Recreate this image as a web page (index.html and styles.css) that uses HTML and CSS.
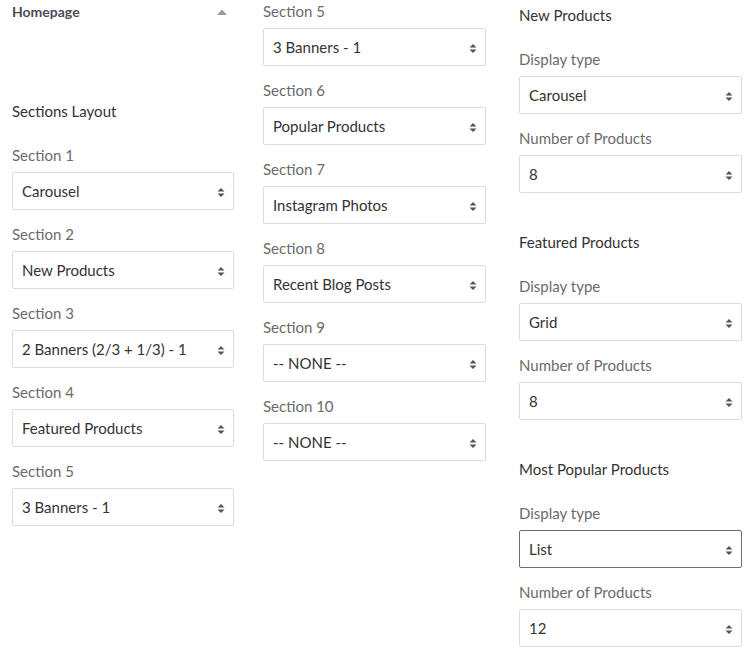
FILE: index.html
```html
<!DOCTYPE html>
<html lang="en">
<head>
<meta charset="utf-8">
<title>Homepage settings</title>
<link rel="stylesheet" href="styles.css">
</head>
<body>
<div class="page">
  <div class="col col-left">
    <div class="panel-head">
      <span class="panel-title">Homepage</span>
      <svg class="caret" width="10" height="6" viewBox="0 0 10 6"><path d="M0 6 L5 0.5 L10 6 Z" fill="#9a9a9a"/></svg>
    </div>
    <div class="group-title">Sections Layout</div>
    <div class="field"><div class="label">Section 1</div><div class="select"><span>Carousel</span><svg class="arrows" width="8" height="11" viewBox="0 0 8 11"><path d="M0.5 4.5 L4 1 L7.5 4.5 Z M0.5 6.5 L4 10 L7.5 6.5 Z" fill="#555"/></svg></div></div>
    <div class="field"><div class="label">Section 2</div><div class="select"><span>New Products</span><svg class="arrows" width="8" height="11" viewBox="0 0 8 11"><path d="M0.5 4.5 L4 1 L7.5 4.5 Z M0.5 6.5 L4 10 L7.5 6.5 Z" fill="#555"/></svg></div></div>
    <div class="field"><div class="label">Section 3</div><div class="select"><span>2 Banners (2/3 + 1/3) - 1</span><svg class="arrows" width="8" height="11" viewBox="0 0 8 11"><path d="M0.5 4.5 L4 1 L7.5 4.5 Z M0.5 6.5 L4 10 L7.5 6.5 Z" fill="#555"/></svg></div></div>
    <div class="field"><div class="label">Section 4</div><div class="select"><span>Featured Products</span><svg class="arrows" width="8" height="11" viewBox="0 0 8 11"><path d="M0.5 4.5 L4 1 L7.5 4.5 Z M0.5 6.5 L4 10 L7.5 6.5 Z" fill="#555"/></svg></div></div>
    <div class="field"><div class="label">Section 5</div><div class="select"><span>3 Banners - 1</span><svg class="arrows" width="8" height="11" viewBox="0 0 8 11"><path d="M0.5 4.5 L4 1 L7.5 4.5 Z M0.5 6.5 L4 10 L7.5 6.5 Z" fill="#555"/></svg></div></div>
  </div>

  <div class="col col-mid">
    <div class="field"><div class="label">Section 5</div><div class="select"><span>3 Banners - 1</span><svg class="arrows" width="8" height="11" viewBox="0 0 8 11"><path d="M0.5 4.5 L4 1 L7.5 4.5 Z M0.5 6.5 L4 10 L7.5 6.5 Z" fill="#555"/></svg></div></div>
    <div class="field"><div class="label">Section 6</div><div class="select"><span>Popular Products</span><svg class="arrows" width="8" height="11" viewBox="0 0 8 11"><path d="M0.5 4.5 L4 1 L7.5 4.5 Z M0.5 6.5 L4 10 L7.5 6.5 Z" fill="#555"/></svg></div></div>
    <div class="field"><div class="label">Section 7</div><div class="select"><span>Instagram Photos</span><svg class="arrows" width="8" height="11" viewBox="0 0 8 11"><path d="M0.5 4.5 L4 1 L7.5 4.5 Z M0.5 6.5 L4 10 L7.5 6.5 Z" fill="#555"/></svg></div></div>
    <div class="field"><div class="label">Section 8</div><div class="select"><span>Recent Blog Posts</span><svg class="arrows" width="8" height="11" viewBox="0 0 8 11"><path d="M0.5 4.5 L4 1 L7.5 4.5 Z M0.5 6.5 L4 10 L7.5 6.5 Z" fill="#555"/></svg></div></div>
    <div class="field"><div class="label">Section 9</div><div class="select"><span>-- NONE --</span><svg class="arrows" width="8" height="11" viewBox="0 0 8 11"><path d="M0.5 4.5 L4 1 L7.5 4.5 Z M0.5 6.5 L4 10 L7.5 6.5 Z" fill="#555"/></svg></div></div>
    <div class="field"><div class="label">Section 10</div><div class="select"><span>-- NONE --</span><svg class="arrows" width="8" height="11" viewBox="0 0 8 11"><path d="M0.5 4.5 L4 1 L7.5 4.5 Z M0.5 6.5 L4 10 L7.5 6.5 Z" fill="#555"/></svg></div></div>
  </div>

  <div class="col col-right">
    <div class="group">
      <div class="group-title">New Products</div>
      <div class="field"><div class="label">Display type</div><div class="select"><span>Carousel</span><svg class="arrows" width="8" height="11" viewBox="0 0 8 11"><path d="M0.5 4.5 L4 1 L7.5 4.5 Z M0.5 6.5 L4 10 L7.5 6.5 Z" fill="#555"/></svg></div></div>
      <div class="field"><div class="label">Number of Products</div><div class="select"><span>8</span><svg class="arrows" width="8" height="11" viewBox="0 0 8 11"><path d="M0.5 4.5 L4 1 L7.5 4.5 Z M0.5 6.5 L4 10 L7.5 6.5 Z" fill="#555"/></svg></div></div>
    </div>
    <div class="group">
      <div class="group-title">Featured Products</div>
      <div class="field"><div class="label">Display type</div><div class="select"><span>Grid</span><svg class="arrows" width="8" height="11" viewBox="0 0 8 11"><path d="M0.5 4.5 L4 1 L7.5 4.5 Z M0.5 6.5 L4 10 L7.5 6.5 Z" fill="#555"/></svg></div></div>
      <div class="field"><div class="label">Number of Products</div><div class="select"><span>8</span><svg class="arrows" width="8" height="11" viewBox="0 0 8 11"><path d="M0.5 4.5 L4 1 L7.5 4.5 Z M0.5 6.5 L4 10 L7.5 6.5 Z" fill="#555"/></svg></div></div>
    </div>
    <div class="group">
      <div class="group-title">Most Popular Products</div>
      <div class="field"><div class="label">Display type</div><div class="select select-active"><span>List</span><svg class="arrows" width="8" height="11" viewBox="0 0 8 11"><path d="M0.5 4.5 L4 1 L7.5 4.5 Z M0.5 6.5 L4 10 L7.5 6.5 Z" fill="#555"/></svg></div></div>
      <div class="field"><div class="label">Number of Products</div><div class="select"><span>12</span><svg class="arrows" width="8" height="11" viewBox="0 0 8 11"><path d="M0.5 4.5 L4 1 L7.5 4.5 Z M0.5 6.5 L4 10 L7.5 6.5 Z" fill="#555"/></svg></div></div>
    </div>
  </div>
</div>
</body>
</html>
```
FILE: styles.css
```css
html, body {
  margin: 0;
  padding: 0;
  background: #ffffff;
}

body {
  font-family: Lato, "Open Sans", Arial, sans-serif;
  font-size: 15px;
  color: #333333;
}

.page {
  display: flex;
  align-items: flex-start;
  padding-left: 12px;
}

.col {
  display: flex;
  flex-direction: column;
}

.col-left {
  width: 222px;
  padding-top: 2px;
}

.col-mid {
  width: 223px;
  margin-left: 29px;
  padding-top: 1px;
}

.col-right {
  width: 223px;
  margin-left: 33px;
  padding-top: 5px;
}

.panel-head {
  display: flex;
  justify-content: space-between;
  align-items: center;
  height: 20px;
  padding-right: 7px;
  margin-bottom: 79px;
}

.panel-title {
  font-weight: 700;
  font-size: 14px;
  color: #4b4b55;
  line-height: 20px;
}

.caret {
  display: block;
}

.group + .group {
  margin-top: 25px;
}

.group-title {
  line-height: 20px;
  color: #333333;
  margin-bottom: 24px;
}

.field {
  margin-bottom: 14px;
}

.label {
  line-height: 20px;
  color: #6b6b6b;
  margin-bottom: 7px;
}

.select {
  box-sizing: border-box;
  height: 38px;
  border: 1px solid #dcdcdc;
  border-radius: 2px;
  display: flex;
  align-items: center;
  justify-content: space-between;
  padding: 0 8px 0 9px;
  color: #333333;
}

.select-active {
  border-color: #6e6e6e;
}

.arrows {
  display: block;
  margin-top: 3px;
}
```
